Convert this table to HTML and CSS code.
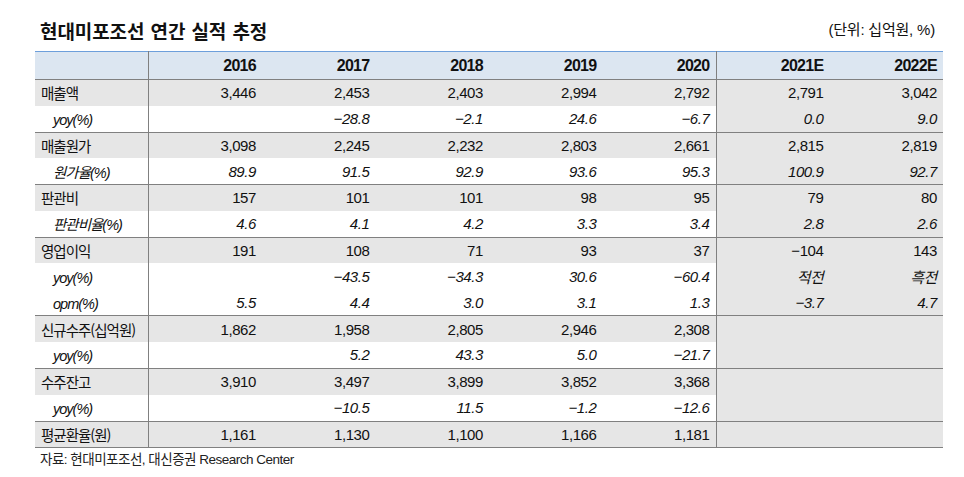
FILE: index.html
```html
<!DOCTYPE html>
<html lang="ko">
<head>
<meta charset="utf-8">
<title>현대미포조선 연간 실적 추정</title>
<link rel="stylesheet" href="styles.css">
</head>
<body>
<div class="page">
  <div class="head">
    <h1 class="title">현대미포조선 연간 실적 추정</h1>
    <span class="unit">(단위: 십억원, %)</span>
  </div>
  <table class="tbl">
    <colgroup>
      <col class="c"><col class="c"><col class="c"><col class="c"><col class="c"><col class="c"><col class="c"><col class="c">
    </colgroup>
    <thead>
      <tr class="hrow">
        <th class="lab sep"></th>
        <th>2016</th><th>2017</th><th>2018</th><th>2019</th><th class="sep">2020</th>
        <th>2021E</th><th>2022E</th>
      </tr>
    </thead>
    <tbody>
      <tr class="main grp">
        <td class="lab sep">매출액</td>
        <td>3,446</td><td>2,453</td><td>2,403</td><td>2,994</td><td class="sep">2,792</td>
        <td class="est">2,791</td><td class="est">3,042</td>
      </tr>
      <tr class="sub">
        <td class="lab sep"><i>yoy(%)</i></td>
        <td></td><td>−28.8</td><td>−2.1</td><td>24.6</td><td class="sep">−6.7</td>
        <td class="est">0.0</td><td class="est">9.0</td>
      </tr>
      <tr class="main grp">
        <td class="lab sep">매출원가</td>
        <td>3,098</td><td>2,245</td><td>2,232</td><td>2,803</td><td class="sep">2,661</td>
        <td class="est">2,815</td><td class="est">2,819</td>
      </tr>
      <tr class="sub">
        <td class="lab sep"><i>원가율(%)</i></td>
        <td>89.9</td><td>91.5</td><td>92.9</td><td>93.6</td><td class="sep">95.3</td>
        <td class="est">100.9</td><td class="est">92.7</td>
      </tr>
      <tr class="main grp">
        <td class="lab sep">판관비</td>
        <td>157</td><td>101</td><td>101</td><td>98</td><td class="sep">95</td>
        <td class="est">79</td><td class="est">80</td>
      </tr>
      <tr class="sub">
        <td class="lab sep"><i>판관비율(%)</i></td>
        <td>4.6</td><td>4.1</td><td>4.2</td><td>3.3</td><td class="sep">3.4</td>
        <td class="est">2.8</td><td class="est">2.6</td>
      </tr>
      <tr class="main grp">
        <td class="lab sep">영업이익</td>
        <td>191</td><td>108</td><td>71</td><td>93</td><td class="sep">37</td>
        <td class="est">−104</td><td class="est">143</td>
      </tr>
      <tr class="sub">
        <td class="lab sep"><i>yoy(%)</i></td>
        <td></td><td>−43.5</td><td>−34.3</td><td>30.6</td><td class="sep">−60.4</td>
        <td class="est">적전</td><td class="est">흑전</td>
      </tr>
      <tr class="sub">
        <td class="lab sep"><i>opm(%)</i></td>
        <td>5.5</td><td>4.4</td><td>3.0</td><td>3.1</td><td class="sep">1.3</td>
        <td class="est">−3.7</td><td class="est">4.7</td>
      </tr>
      <tr class="main grp">
        <td class="lab sep">신규수주(십억원)</td>
        <td>1,862</td><td>1,958</td><td>2,805</td><td>2,946</td><td class="sep">2,308</td>
        <td class="est"></td><td class="est"></td>
      </tr>
      <tr class="sub">
        <td class="lab sep"><i>yoy(%)</i></td>
        <td></td><td>5.2</td><td>43.3</td><td>5.0</td><td class="sep">−21.7</td>
        <td class="est"></td><td class="est"></td>
      </tr>
      <tr class="main grp">
        <td class="lab sep">수주잔고</td>
        <td>3,910</td><td>3,497</td><td>3,899</td><td>3,852</td><td class="sep">3,368</td>
        <td class="est"></td><td class="est"></td>
      </tr>
      <tr class="sub">
        <td class="lab sep"><i>yoy(%)</i></td>
        <td></td><td>−10.5</td><td>11.5</td><td>−1.2</td><td class="sep">−12.6</td>
        <td class="est"></td><td class="est"></td>
      </tr>
      <tr class="main grp last">
        <td class="lab sep">평균환율(원)</td>
        <td>1,161</td><td>1,130</td><td>1,100</td><td>1,166</td><td class="sep">1,181</td>
        <td class="est"></td><td class="est"></td>
      </tr>
    </tbody>
  </table>
  <p class="src">자료: 현대미포조선, 대신증권 Research Center</p>
</div>
</body>
</html>
```

FILE: styles.css
```css
html, body {
  margin: 0;
  padding: 0;
  background: #ffffff;
}

body {
  font-family: "Liberation Sans", "Noto Sans CJK KR", sans-serif;
  color: #111111;
}

.page {
  width: 908px;
  margin-left: 35px;
  padding-top: 17px;
}

.head {
  display: flex;
  justify-content: space-between;
  align-items: flex-end;
  height: 34px;
  padding: 0 8px 0 5px;
}

.title {
  margin: 0;
  font-family: "Noto Sans CJK KR", sans-serif;
  font-size: 19px;
  font-weight: 700;
  letter-spacing: -0.1px;
  word-spacing: 1px;
  line-height: 26px;
  padding-bottom: 7px;
}

.unit {
  font-family: "Liberation Sans", "Noto Sans CJK KR", sans-serif;
  font-size: 15px;
  letter-spacing: -0.2px;
  line-height: 20px;
  padding-bottom: 11px;
}

.tbl {
  width: 908px;
  table-layout: fixed;
  border-collapse: collapse;
  border-top: 1.5px solid #6d9fdb;
  border-bottom: 1.5px solid #808080;
  font-size: 15px;
  letter-spacing: -0.4px;
}

.tbl col.c {
  width: 113.5px;
}

.tbl th,
.tbl td {
  padding: 0 6px 0 0;
  text-align: right;
  white-space: nowrap;
  overflow: visible;
}

.hrow th {
  height: 27px;
  background: #dce6f1;
  font-weight: 700;
  font-size: 16px;
  letter-spacing: -0.7px;
  border-bottom: 1.5px solid #808080;
}

.main td {
  height: 25.6px;
  background: #e6e6e6;
}

.sub td {
  height: 26px;
  background: #ffffff;
  font-style: italic;
}

.sub td.est,
.main td.est {
  background: #e6e6e6;
}

.grp td {
  border-top: 1.5px solid #808080;
}

.tbl .sep {
  border-right: 1.5px solid #808080;
}

.tbl .lab {
  text-align: left;
  padding-left: 6px;
  font-family: "Noto Sans CJK KR", sans-serif;
  font-size: 14.5px;
  letter-spacing: -1px;
}

.sub .lab {
  padding-left: 18px;
}

.sub .lab i {
  font-family: "Liberation Sans", "Noto Sans CJK KR", sans-serif;
  font-style: italic;
  letter-spacing: -1px;
}

.sub td.est {
  font-family: "Liberation Sans", "Noto Sans CJK KR", sans-serif;
}

.src {
  margin: 3px 0 0 5px;
  font-family: "Liberation Sans", "Noto Sans CJK KR", sans-serif;
  font-size: 13.5px;
  line-height: 17px;
  letter-spacing: -0.5px;
  color: #222222;
}
```
